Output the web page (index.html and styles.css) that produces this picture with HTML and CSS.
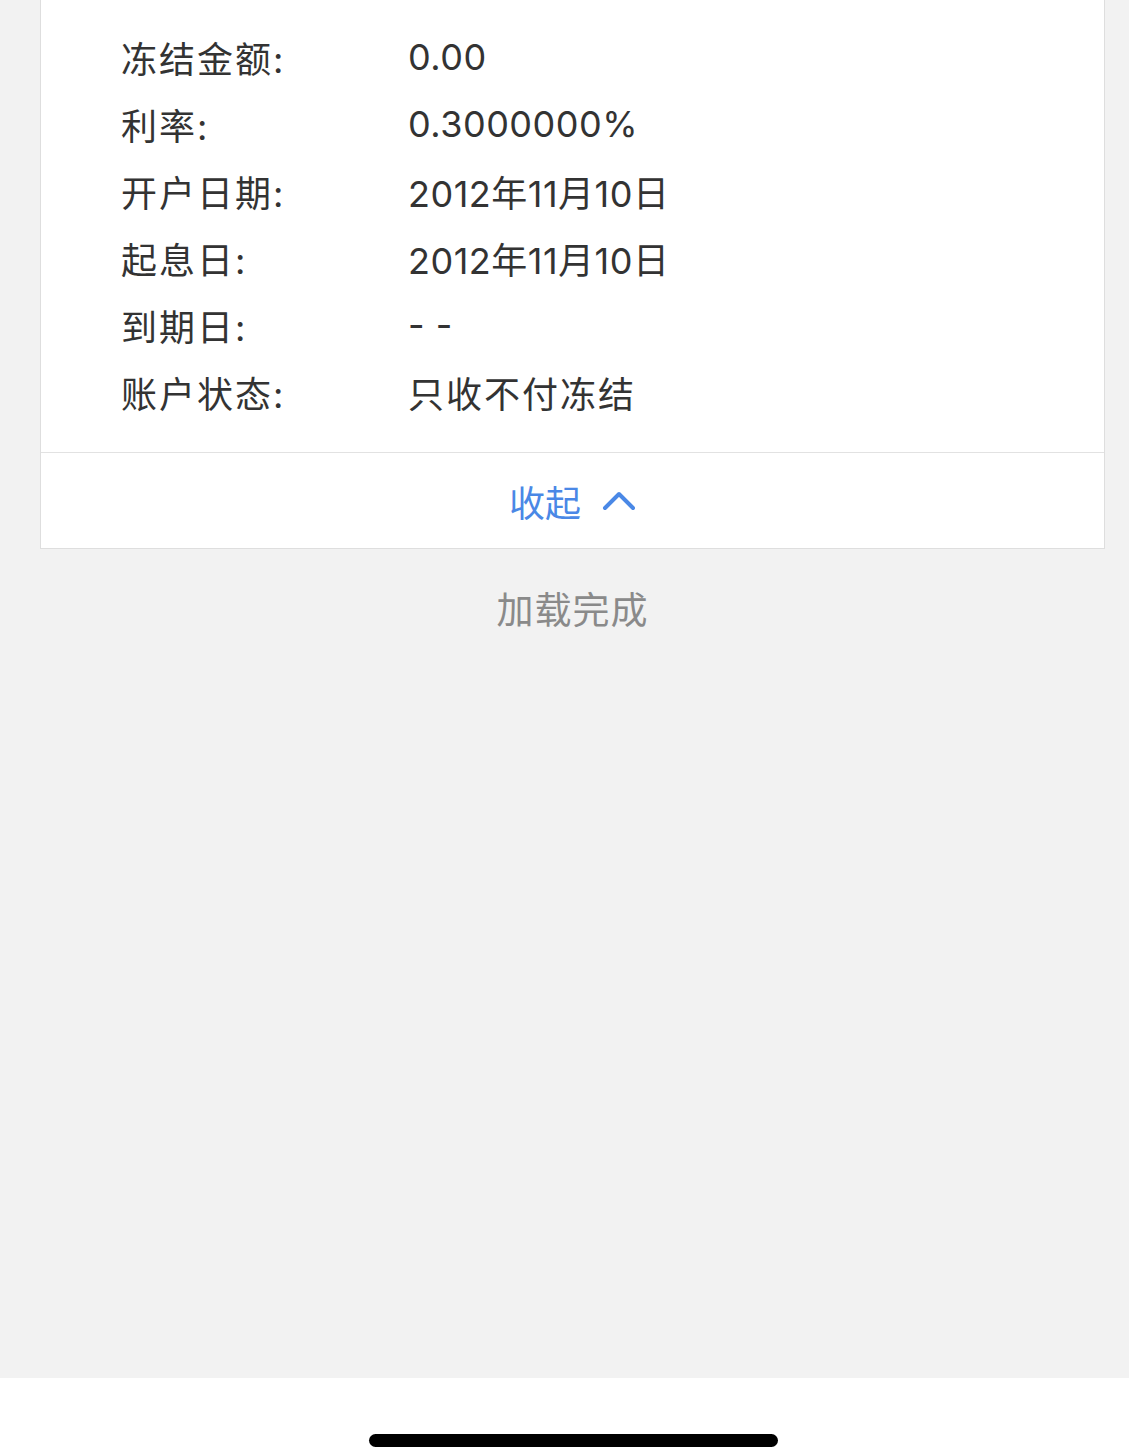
FILE: index.html
```html
<!DOCTYPE html>
<html lang="zh-CN">
<head>
<meta charset="utf-8">
<link rel="stylesheet" href="styles.css">
</head>
<body>
<div class="screen">
  <main class="content">
    <section class="card">
      <div class="rows">
        <div class="row"><span class="label">冻结金额:</span><span class="value">0.00</span></div>
        <div class="row"><span class="label">利率:</span><span class="value">0.3000000%</span></div>
        <div class="row"><span class="label">开户日期:</span><span class="value">2012年11月10日</span></div>
        <div class="row"><span class="label">起息日:</span><span class="value">2012年11月10日</span></div>
        <div class="row"><span class="label">到期日:</span><span class="value">- -</span></div>
        <div class="row"><span class="label">账户状态:</span><span class="value cjk">只收不付冻结</span></div>
      </div>
      <div class="collapse">
        <span>收起</span>
        <svg class="chev" width="34" height="22" viewBox="0 0 34 22"><path d="M3 19 L17 5 L31 19" fill="none" stroke="#4a88e6" stroke-width="4" stroke-linecap="round" stroke-linejoin="round"/></svg>
      </div>
    </section>
    <div class="loaded">加载完成</div>
  </main>
  <footer class="home">
    <div class="indicator"></div>
  </footer>
</div>
</body>
</html>
```
FILE: styles.css
```css
html, body {
  margin: 0;
  padding: 0;
}
body {
  background: #f2f2f2;
  font-family: "Noto Sans CJK SC", "Noto Sans", sans-serif;
}
.screen {
  width: 1129px;
  height: 1448px;
  display: flex;
  flex-direction: column;
  overflow: hidden;
}
.content {
  flex: 1;
  padding-left: 40px;
  padding-right: 24px;
}
.card {
  background: #fff;
  border: 1px solid #dedede;
  border-top: none;
}
.rows {
  padding: 23px 0 27px 80px;
}
.row {
  display: flex;
  height: 67px;
  align-items: center;
  font-size: 36px;
  color: #333;
}
.label {
  width: 287px;
  letter-spacing: 2px;
  font-family: Inter, "Noto Sans CJK SC", sans-serif;
}
.value {
  font-family: Inter, "Noto Sans CJK SC", sans-serif;
  letter-spacing: 0.5px;
}
.value.cjk {
  letter-spacing: 2px;
}
.collapse {
  border-top: 1px solid #e2e2e2;
  height: 95px;
  display: flex;
  align-items: center;
  justify-content: center;
  gap: 21px;
  color: #4a88e6;
  font-size: 36px;
}
.chev {
  margin-top: -2px;
}
.loaded {
  text-align: center;
  color: #8a8a8a;
  font-size: 37px;
  letter-spacing: 1px;
  margin-top: 34px;
  line-height: 50px;
}
.home {
  height: 70px;
  background: #fff;
  position: relative;
}
.indicator {
  position: absolute;
  left: 369px;
  top: 56px;
  width: 409px;
  height: 13px;
  border-radius: 7px;
  background: #000;
}
```
